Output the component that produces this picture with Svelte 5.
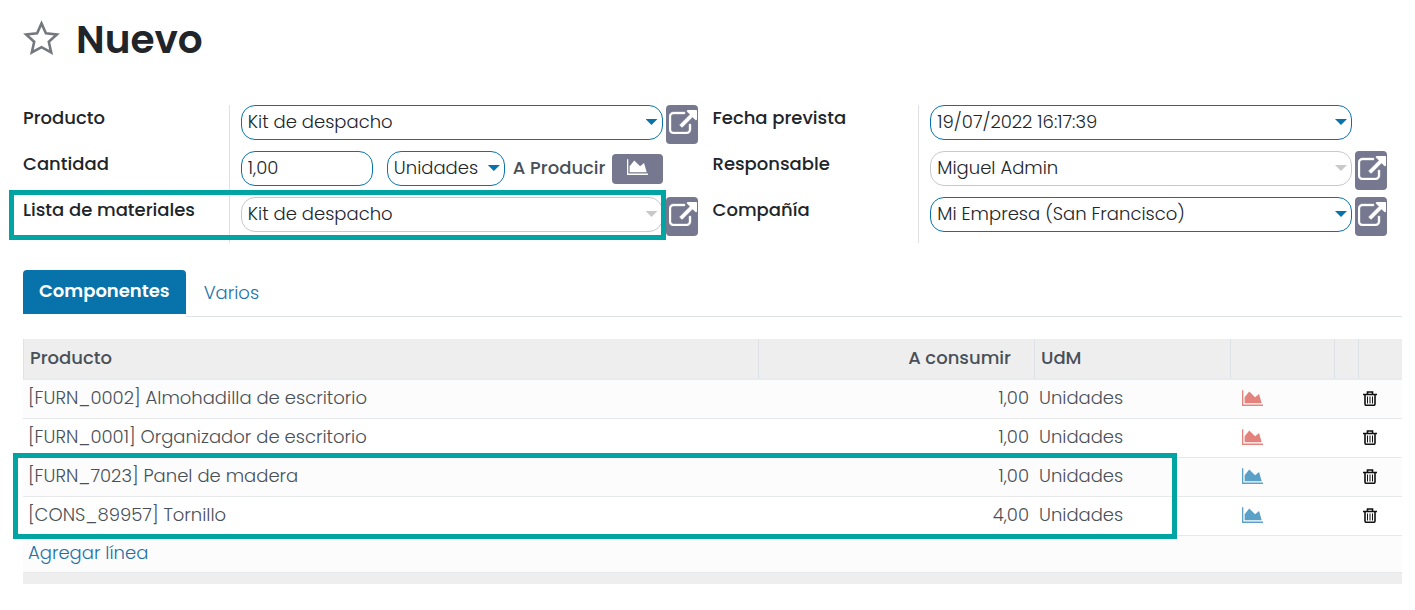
<script>
  let product = $state('Kit de despacho');
  let quantity = $state('1,00');
  let unit = $state('Unidades');
  let bom = $state('Kit de despacho');
  let date = $state('19/07/2022 16:17:39');
  let responsible = $state('Miguel Admin');
  let company = $state('Mi Empresa (San Francisco)');
  let tab = $state('Componentes');

  const lines = [
    { name: '[FURN_0002] Almohadilla de escritorio', qty: '1,00', uom: 'Unidades', state: 'short' },
    { name: '[FURN_0001] Organizador de escritorio', qty: '1,00', uom: 'Unidades', state: 'short' },
    { name: '[FURN_7023] Panel de madera', qty: '1,00', uom: 'Unidades', state: 'ready' },
    { name: '[CONS_89957] Tornillo', qty: '4,00', uom: 'Unidades', state: 'ready' }
  ];
</script>

{#snippet chartIcon()}
  <svg class="chart" viewBox="0 128 2048 1536" aria-hidden="true">
    <path d="M2048 1536v128h-2048v-1536h128v1408h1920zM1664 512l256 896h-1664v-576l448-576 576 576z" />
  </svg>
{/snippet}

{#snippet openButton(label)}
  <button class="open" type="button" aria-label={label}>
    <svg viewBox="0 0 1792 1536" aria-hidden="true">
      <path d="M1408 928v320q0 119-84.5 203.5t-203.5 84.5h-832q-119 0-203.5-84.5t-84.5-203.5v-832q0-119 84.5-203.5t203.5-84.5h704q14 0 23 9t9 23v64q0 14-9 23t-23 9h-704q-66 0-113 47t-47 113v832q0 66 47 113t113 47h832q66 0 113-47t47-113v-320q0-14 9-23t23-9h64q14 0 23 9t9 23zM1792 64v512q0 26-19 45t-45 19-45-19l-176-176-652 652q-10 10-23 10t-23-10l-114-114q-10-10-10-23t10-23l652-652-176-176q-19-19-19-45t19-45 45-19h512q26 0 45 19t19 45z" />
    </svg>
  </button>
{/snippet}

<main>
  <header>
    <button class="star" type="button" aria-label="Favorito">
      <svg viewBox="0 0 38 36" aria-hidden="true">
        <path d="M18.5 3.4L22.9 13.2L33.9 14.4L25.8 21.8L28.2 32.4L18.5 27.2L8.8 32.4L11.2 21.8L3.1 14.4L14.1 13.2Z" />
      </svg>
    </button>
    <h1>Nuevo</h1>
  </header>

  <form class="groups">
    <div class="group">
      <div class="row">
        <label for="product">Producto</label>
        <div class="value">
          <div class="pick"><select id="product" bind:value={product}><option>Kit de despacho</option></select></div>
          {@render openButton('Abrir producto')}
        </div>
      </div>
      <div class="row">
        <label for="quantity">Cantidad</label>
        <div class="value">
          <div class="amount">
            <input id="quantity" class="qty" type="text" bind:value={quantity} />
            <div class="pick unit"><select aria-label="Unidad" bind:value={unit}><option>Unidades</option></select></div>
            <span class="produce">A Producir</span>
            <button class="forecast" type="button" aria-label="Previsión">{@render chartIcon()}</button>
          </div>
        </div>
      </div>
      <div class="row marked">
        <label for="bom">Lista de materiales</label>
        <div class="value">
          <div class="pick muted"><select id="bom" bind:value={bom}><option>Kit de despacho</option></select></div>
          {@render openButton('Abrir lista de materiales')}
        </div>
        <span class="frame"></span>
      </div>
    </div>

    <div class="group">
      <div class="row">
        <label for="date">Fecha prevista</label>
        <div class="value">
          <div class="pick"><input id="date" type="text" bind:value={date} /></div>
        </div>
      </div>
      <div class="row">
        <label for="responsible">Responsable</label>
        <div class="value">
          <div class="pick muted"><select id="responsible" bind:value={responsible}><option>Miguel Admin</option></select></div>
          {@render openButton('Abrir responsable')}
        </div>
      </div>
      <div class="row">
        <label for="company">Compañía</label>
        <div class="value">
          <div class="pick"><select id="company" bind:value={company}><option>Mi Empresa (San Francisco)</option></select></div>
          {@render openButton('Abrir compañía')}
        </div>
      </div>
    </div>
  </form>

  <nav>
    <div class="tabs" role="tablist">
      {#each ['Componentes', 'Varios'] as name}
        <button type="button" role="tab" aria-selected={tab === name} class:active={tab === name} onclick={() => (tab = name)}>{name}</button>
      {/each}
    </div>
  </nav>

  <section>
    <table>
      <colgroup>
        <col /><col class="c-qty" /><col class="c-uom" /><col class="c-chart" /><col class="c-gap" /><col class="c-del" />
      </colgroup>
      <thead>
        <tr><th>Producto</th><th class="num">A consumir</th><th>UdM</th><th></th><th></th><th></th></tr>
      </thead>
      <tbody>
        {#each lines as line}
          <tr>
            <td>{line.name}</td>
            <td class="num">{line.qty}</td>
            <td>{line.uom}</td>
            <td class="icon"><button type="button" class={line.state} aria-label="Previsión">{@render chartIcon()}</button></td>
            <td></td>
            <td>
              <button type="button" aria-label="Eliminar">
                <svg class="trash" viewBox="0 0 14 15" aria-hidden="true">
                  <path d="M0 3.5H14M4.5 3V1H9.5V3M2 4V13Q2 14.3 3.3 14.3H10.7Q12 14.3 12 13V4" />
                  <path class="ribs" d="M4.5 5.5V12.5M7 5.5V12.5M9.5 5.5V12.5" />
                </svg>
              </button>
            </td>
          </tr>
        {/each}
        <tr class="add"><td colspan="6"><a href="#linea">Agregar línea</a></td></tr>
      </tbody>
      <tfoot><tr><td colspan="6"></td></tr></tfoot>
    </table>
    <span class="frame"></span>
  </section>
</main>

<style>
  :global(body) {
    margin: 0;
    background: #fff;
  }
  main {
    --blue: #0873aa;
    --slate: #75788f;
    --teal: #00a5a3;
    padding: 16px 13px 24px 23px;
    font: 300 18px/24px Poppins, Inter, sans-serif;
    color: #495057;
  }
  button, input, select {
    box-sizing: border-box;
    margin: 0;
    font: inherit;
    color: inherit;
  }
  button {
    border: 0;
    padding: 0;
    background: none;
    cursor: pointer;
  }
  svg {
    display: block;
    fill: currentColor;
  }
  header {
    display: flex;
    gap: 15px;
    height: 48px;
    margin-bottom: 41px;
  }
  .star {
    padding-top: 4px;
    align-self: start;
    color: #75797f;
  }
  .star svg {
    width: 38px;
    height: 36px;
    fill: none;
    stroke: currentColor;
    stroke-width: 2.6;
  }
  h1 {
    margin: 0;
    font-size: 39px;
    line-height: 48px;
    font-weight: 600;
    color: #212529;
  }
  .groups {
    display: grid;
    grid-template-columns: 1fr 1fr;
  }
  .row {
    position: relative;
    display: grid;
    grid-template-columns: calc(30% - 1px) 1fr;
    height: 46px;
  }
  label {
    line-height: 26px;
    font-weight: 500;
    color: #212529;
  }
  .value {
    display: grid;
    grid-template-columns: 1fr 32px;
    gap: 3px;
    align-items: start;
    padding: 0 15px 0 11px;
    border-left: 1px solid #dee2e6;
  }
  .pick {
    position: relative;
    color: var(--blue);
  }
  .pick::after {
    content: '';
    position: absolute;
    right: 5px;
    top: 14px;
    width: 12px;
    height: 6px;
    background: currentColor;
    clip-path: polygon(0 0, 100% 0, 50% 100%);
    pointer-events: none;
  }
  .pick.muted {
    color: #c9c9c9;
  }
  .pick select, .pick input, .qty {
    appearance: none;
    width: 100%;
    height: 35px;
    padding: 0 6px 2px;
    border: 1px solid var(--blue);
    border-radius: 14px;
    background: #fff;
    color: #212529;
    outline: 0;
  }
  .pick.muted select {
    border-color: #c9c9c9;
  }
  .amount {
    display: flex;
    align-items: center;
  }
  .amount .qty {
    width: 132px;
    margin-right: 14px;
  }
  .unit {
    flex: 0 0 118px;
  }
  .produce {
    flex: 1;
    padding: 0 0 2px 8px;
    font-weight: 500;
    white-space: nowrap;
  }
  .forecast {
    display: grid;
    place-items: center;
    width: 51px;
    height: 30px;
    border-radius: 4px;
    background: var(--slate);
    color: #fff;
  }
  .forecast .chart {
    margin-bottom: 3px;
  }
  .chart {
    width: 21px;
    height: 16px;
  }
  .open {
    height: 39px;
    padding: 5px 1px 10px 3px;
    border-radius: 4px;
    background: var(--slate);
    color: #fff;
  }
  .open svg {
    width: 28px;
    height: 24px;
    stroke: #fff;
    stroke-width: 24;
  }
  .frame {
    position: absolute;
    box-sizing: border-box;
    border: 5px solid var(--teal);
    pointer-events: none;
  }
  .marked .frame {
    inset: -7px 47px 3px -14px;
  }
  nav {
    margin-top: 27px;
    height: 47px;
    background: linear-gradient(#dee2e6, #dee2e6) 163px 100% / 100% 1px no-repeat;
  }
  .tabs {
    display: flex;
  }
  .tabs button {
    height: 44px;
    padding: 2px 18px 0;
    color: #1d71a8;
  }
  .tabs .active {
    padding: 0 16px 2px;
    border-radius: 4px 4px 0 0;
    background: var(--blue);
    color: #fff;
    font-weight: 600;
  }
  section {
    position: relative;
    margin-top: 22px;
  }
  section .frame {
    inset: 114px 225px auto -10px;
    height: 86px;
  }
  table {
    width: 100%;
    table-layout: fixed;
    border-collapse: separate;
    border-spacing: 0;
  }
  .c-qty { width: 276px; }
  .c-uom { width: 196px; }
  .c-chart { width: 104px; }
  .c-gap { width: 24px; }
  .c-del { width: 44px; }
  th {
    height: 38px;
    padding: 0 6px 1px;
    border-left: 1px solid #dee2e6;
    border-bottom: 2px solid #e9ecef;
    background: #eee;
    font-weight: 500;
    text-align: left;
  }
  th:first-child {
    padding-left: 6px;
  }
  th.num {
    padding-right: 23px;
  }
  td {
    height: 36px;
    padding: 0 5px 2px;
    border-bottom: 1px solid #e6e8ea;
  }
  .add td {
    height: 34px;
  }
  .num {
    text-align: right;
  }
  tbody tr:nth-child(odd) {
    background: #fcfcfc;
  }
  td.icon {
    padding-left: 12px;
  }
  td button {
    display: block;
  }
  .short { color: #e4837e; }
  .ready { color: #5ba0c6; }
  .trash {
    width: 14px;
    height: 15px;
    fill: none;
    stroke: #111;
    stroke-width: 1.6;
  }
  .ribs {
    stroke-width: 1;
  }
  a {
    color: #1d71a8;
    text-decoration: none;
  }
  tfoot td {
    height: 10px;
    padding: 0;
    border-bottom-color: #eee;
    background: #eee;
  }
</style>
